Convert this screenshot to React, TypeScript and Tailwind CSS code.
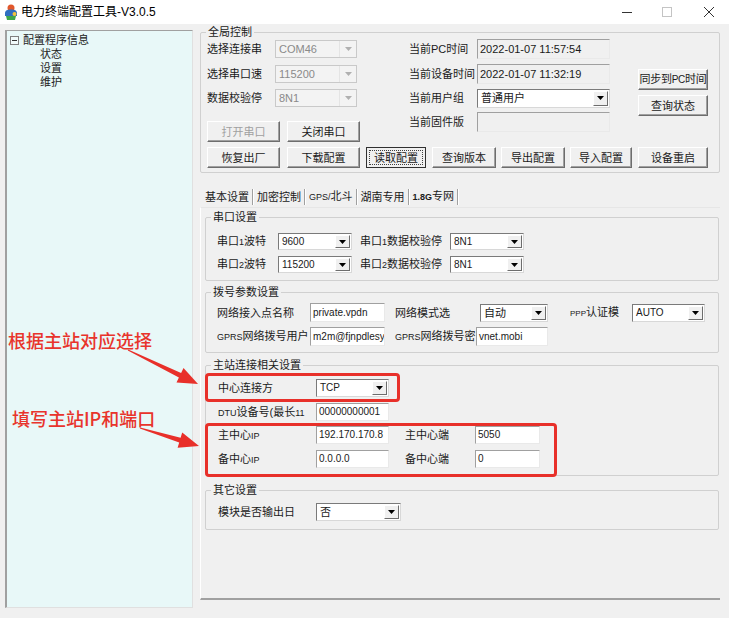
import React from "react";

type ComboProps = { value: string; cls: string; disabled?: boolean; vcls?: string };

function Combo({ value, cls, disabled, vcls = "" }: ComboProps) {
  if (disabled)
    return (
      <div className={`${cls} shrink-0 flex items-center border border-[#c9c9c9] bg-[#f3f3f3] text-[#8a8a8a]`}>
        <span className={`flex-1 pl-[3px] whitespace-nowrap overflow-hidden ${vcls}`}>{value}</span>
        <div className="w-[17px] h-full flex items-center justify-center border-l border-[#e4e4e4]">
          <svg width="7" height="4" viewBox="0 0 7 4">
            <path d="M0 0h7L3.5 4z" fill="#b0b0b0" />
          </svg>
        </div>
      </div>
    );
  return (
    <div
      className={`${cls} shrink-0 flex items-center bg-white border border-t-[#7a7a7a] border-l-[#7a7a7a] border-r-[#d8d8d8] border-b-[#d8d8d8] pr-[1px]`}
    >
      <span className={`flex-1 pl-[3px] whitespace-nowrap overflow-hidden ${vcls}`}>{value}</span>
      <div className="w-[15px] h-[calc(100%-2px)] bg-[#f0f0f0] border border-t-white border-l-white border-r-[#6d6d6d] border-b-[#6d6d6d] flex items-center justify-center">
        <svg width="7" height="4" viewBox="0 0 7 4">
          <path d="M0 0h7L3.5 4z" fill="#000" />
        </svg>
      </div>
    </div>
  );
}

function Input({ value, cls, ro }: { value: string; cls: string; ro?: boolean }) {
  return (
    <div
      className={`${cls} shrink-0 flex items-center overflow-hidden whitespace-nowrap border border-t-[#a0a0a0] border-l-[#a0a0a0] border-r-[#e9e9e9] border-b-[#e9e9e9] pl-[2px] ${
        ro ? "bg-[#f0f0f0] text-[11px]" : "bg-white text-[10px]"
      }`}
    >
      {value}
    </div>
  );
}

function Btn({ label, cls, disabled, focused }: { label: React.ReactNode; cls: string; disabled?: boolean; focused?: boolean }) {
  if (focused)
    return (
      <div className={`${cls} shrink-0 h-[21px] border border-[#303030] bg-[#f0f0f0] p-[2px]`}>
        <div className="w-full h-full border border-dotted border-[#404040] flex items-center justify-center whitespace-nowrap">
          {label}
        </div>
      </div>
    );
  return (
    <div
      className={`${cls} shrink-0 h-[21px] flex items-center justify-center whitespace-nowrap bg-[#f0f0f0] border border-t-white border-l-white border-r-[#6d6d6d] border-b-[#6d6d6d] shadow-[inset_-1px_-1px_0_#a0a0a0] ${
        disabled ? "text-[#a0a0a0]" : ""
      }`}
    >
      {label}
    </div>
  );
}

function Lbl({ cls, children }: { cls: string; children: React.ReactNode }) {
  return <div className={`${cls} shrink-0 whitespace-nowrap`}>{children}</div>;
}

const S = ({ children }: { children: React.ReactNode }) => <span className="text-[9px]">{children}</span>;

function TitleBar() {
  return (
    <div className="h-[24px] bg-white flex items-center">
      <svg className="ml-[4px]" width="14" height="17" viewBox="0 0 14 17">
        <circle cx="7" cy="4" r="3.5" fill="#e2572b" />
        <path d="M1 9c0-2.5 2.5-3.5 6-3.5s6 1 6 3.5v3H1z" fill="#2f6fc0" />
        <path d="M2 12h10l-1 4H3z" fill="#3ea64a" />
        <circle cx="10.5" cy="10" r="2" fill="#f3c43c" />
      </svg>
      <span className="ml-[3px] text-[12px] text-black">电力终端配置工具-V3.0.5</span>
      <div className="ml-auto mr-[15px] flex items-center">
        <svg width="10" height="10" viewBox="0 0 10 10">
          <path d="M0 5.5h10" stroke="#333" strokeWidth="1" />
        </svg>
        <svg className="ml-[30px]" width="10" height="10" viewBox="0 0 10 10">
          <rect x="0.5" y="0.5" width="9" height="9" fill="none" stroke="#c4c4c4" />
        </svg>
        <svg className="ml-[32px]" width="10" height="10" viewBox="0 0 10 10">
          <path d="M0 0L10 10M10 0L0 10" stroke="#333" strokeWidth="1" />
        </svg>
      </div>
    </div>
  );
}

function Tree() {
  return (
    <div className="ml-[5px] mt-[6px] w-[188px] h-[578px] shrink-0 bg-[#e8f8f8] border-t border-l-2 border-r border-b border-t-[#a0a0a0] border-l-[#a0a0a0] border-r-[#e0e0e0] border-b-[#e0e0e0] text-[#222]">
      <div className="flex items-center mt-[2px] ml-[3px] h-[14px]">
        <div className="w-[9px] h-[9px] border border-[#808080] flex items-center justify-center bg-white/40">
          <div className="w-[5px] h-[1px] bg-[#333]" />
        </div>
        <span className="ml-[4px]">配置程序信息</span>
      </div>
      <div className="ml-[33px] flex flex-col">
        <span className="h-[14px]">状态</span>
        <span className="h-[14px]">设置</span>
        <span className="h-[14px]">维护</span>
      </div>
    </div>
  );
}

function Group({ title, cls, children }: { title: string; cls: string; children: React.ReactNode }) {
  return (
    <fieldset className={`${cls} border border-[#d0d0d0] rounded-[2px]`}>
      <legend className="ml-[5px] px-[2px] leading-[14px]">{title}</legend>
      {children}
    </fieldset>
  );
}

function Global() {
  return (
    <Group title="全局控制" cls="w-[520px]">
      <div className="pl-[6px] pb-[4px]">
        <div className="flex items-start">
          <div className="flex flex-col w-[153px]">
            <div className="h-[20px] flex items-center">
              <Lbl cls="w-[68px]">选择连接串</Lbl>
              <Combo value="COM46" cls="w-[82px] h-[18px]" disabled />
            </div>
            <div className="h-[20px] mt-[5px] flex items-center">
              <Lbl cls="w-[68px]">选择串口速</Lbl>
              <Combo value="115200" cls="w-[82px] h-[18px]" disabled />
            </div>
            <div className="h-[20px] mt-[4px] flex items-center">
              <Lbl cls="w-[68px]">数据校验停</Lbl>
              <Combo value="8N1" cls="w-[82px] h-[18px]" disabled />
            </div>
            <div className="mt-[13px] flex">
              <Btn label="打开串口" cls="w-[73px]" disabled />
              <Btn label="关闭串口" cls="w-[73px] ml-[7px]" />
            </div>
          </div>
          <div className="ml-[49px] flex flex-col w-[201px]">
            <div className="h-[20px] flex items-center">
              <Lbl cls="w-[68px]">当前PC时间</Lbl>
              <Input value="2022-01-07 11:57:54" cls="w-[133px] h-[20px]" ro />
            </div>
            <div className="h-[20px] mt-[5px] flex items-center">
              <Lbl cls="w-[68px]">当前设备时间</Lbl>
              <Input value="2022-01-07 11:32:19" cls="w-[133px] h-[20px]" ro />
            </div>
            <div className="h-[20px] mt-[4px] flex items-center">
              <Lbl cls="w-[68px]">当前用户组</Lbl>
              <Combo value="普通用户" cls="w-[133px] h-[19px]" />
            </div>
            <div className="h-[20px] mt-[4px] flex items-center">
              <Lbl cls="w-[68px]">当前固件版</Lbl>
              <Input value="" cls="w-[133px] h-[20px]" ro />
            </div>
          </div>
          <div className="ml-[28px] flex flex-col mt-[30px]">
            <Btn
              label={
                <span className="tracking-[-0.3px]">
                  同步到<span className="text-[10px]">PC</span>时间
                </span>
              }
              cls="w-[70px]"
            />
            <Btn label="查询状态" cls="w-[70px] mt-[5px]" />
          </div>
        </div>
        <div className="mt-[5px] flex">
          <Btn label="恢复出厂" cls="w-[73px]" />
          <Btn label="下载配置" cls="w-[73px] ml-[7px]" />
          <Btn label="读取配置" cls="w-[60px] ml-[6px]" focused />
          <Btn label="查询版本" cls="w-[64px] ml-[6px]" />
          <Btn label="导出配置" cls="w-[64px] ml-[5px]" />
          <Btn label="导入配置" cls="w-[62px] ml-[5px]" />
          <Btn label="设备重启" cls="w-[70px] ml-[6px]" />
        </div>
      </div>
    </Group>
  );
}

function Sep() {
  return <div className="w-[2px] h-[16px] border-l border-r border-l-[#a0a0a0] border-r-white mx-[2px]" />;
}

function Tabs() {
  return (
    <div className="mt-[15px] ml-[4px] h-[17px] flex items-center">
      <span className="px-[1px]">基本设置</span>
      <Sep />
      <span className="px-[1px]">加密控制</span>
      <Sep />
      <span className="px-[1px]">
        <S>GPS/</S>北斗
      </span>
      <Sep />
      <span className="px-[1px]">湖南专用</span>
      <Sep />
      <span className="px-[1px]">
        <span className="text-[9px] font-bold">1.8G</span>专网
      </span>
      <Sep />
    </div>
  );
}

function Panel() {
  const v = "text-[10px]";
  return (
    <div className="mt-[2px] w-[520px] h-[393px] border-t border-t-[#e6e6e6] border-l border-l-white border-b-2 border-b-[#a0a0a0]">
      <Group title="串口设置" cls="ml-[4px] mt-[2px] w-[514px]">
        <div className="pl-[11px] pt-[9px] pb-[7px]">
          <div className="h-[17px] flex items-center">
            <Lbl cls="w-[61px]">
              串口<S>1</S>波特
            </Lbl>
            <Combo value="9600" cls="w-[74px] h-[17px]" vcls={v} />
            <Lbl cls="w-[90px] ml-[8px]">
              串口<S>1</S>数据校验停
            </Lbl>
            <Combo value="8N1" cls="w-[74px] h-[17px]" vcls={v} />
          </div>
          <div className="h-[17px] mt-[6px] flex items-center">
            <Lbl cls="w-[61px]">
              串口<S>2</S>波特
            </Lbl>
            <Combo value="115200" cls="w-[74px] h-[17px]" vcls={v} />
            <Lbl cls="w-[90px] ml-[8px]">
              串口<S>2</S>数据校验停
            </Lbl>
            <Combo value="8N1" cls="w-[74px] h-[17px]" vcls={v} />
          </div>
        </div>
      </Group>

      <Group title="拨号参数设置" cls="ml-[4px] mt-[4px] w-[514px]">
        <div className="pl-[11px] pt-[4px] pb-[6px]">
          <div className="h-[19px] flex items-center">
            <Lbl cls="w-[93px]">网络接入点名称</Lbl>
            <Input value="private.vpdn" cls="w-[75px] h-[19px]" />
            <Lbl cls="w-[85px] ml-[10px]">网络模式选</Lbl>
            <Combo value="自动" cls="w-[68px] h-[18px]" />
            <Lbl cls="w-[62px] ml-[22px]">
              <span className="text-[8px]">PPP</span>认证模
            </Lbl>
            <Combo value="AUTO" cls="w-[73px] h-[18px]" vcls={v} />
          </div>
          <div className="h-[19px] mt-[5px] flex items-center">
            <Lbl cls="w-[93px]">
              <S>GPRS</S>网络拨号用户
            </Lbl>
            <Input value="m2m@fjnpdlesy.v" cls="w-[75px] h-[19px]" />
            <Lbl cls="w-[81px] ml-[10px]">
              <S>GPRS</S>网络拨号密
            </Lbl>
            <Input value="vnet.mobi" cls="w-[72px] h-[19px]" />
          </div>
        </div>
      </Group>

      <Group title="主站连接相关设置" cls="ml-[4px] mt-[5px] w-[514px]">
        <div className="pl-[12px] pt-[7px] pb-[7px]">
          <div className="h-[18px] flex items-center">
            <Lbl cls="w-[98px]">中心连接方</Lbl>
            <Combo value="TCP" cls="w-[73px] h-[18px]" vcls={v} />
          </div>
          <div className="h-[18px] mt-[6px] flex items-center">
            <Lbl cls="w-[98px]">
              <S>DTU</S>设备号(最长<S>11</S>
            </Lbl>
            <Input value="00000000001" cls="w-[73px] h-[18px]" />
          </div>
          <div className="h-[18px] mt-[5px] flex items-center">
            <Lbl cls="w-[98px]">
              主中心<S>IP</S>
            </Lbl>
            <Input value="192.170.170.8" cls="w-[73px] h-[18px]" />
            <Lbl cls="w-[70px] ml-[16px]">主中心端</Lbl>
            <Input value="5050" cls="w-[65px] h-[18px]" />
          </div>
          <div className="h-[18px] mt-[6px] flex items-center">
            <Lbl cls="w-[98px]">
              备中心<S>IP</S>
            </Lbl>
            <Input value="0.0.0.0" cls="w-[73px] h-[18px]" />
            <Lbl cls="w-[70px] ml-[16px]">备中心端</Lbl>
            <Input value="0" cls="w-[65px] h-[18px]" />
          </div>
        </div>
      </Group>

      <Group title="其它设置" cls="ml-[4px] mt-[7px] w-[514px]">
        <div className="pl-[12px] pt-[6px] pb-[8px]">
          <div className="h-[18px] flex items-center">
            <Lbl cls="w-[98px]">模块是否输出日</Lbl>
            <Combo value="否" cls="w-[85px] h-[18px]" />
          </div>
        </div>
      </Group>
    </div>
  );
}

function Annotations() {
  return (
    <>
      <div className="absolute left-[205px] top-[373px] w-[195px] h-[29px] border-[3px] border-[#e8302a] rounded-[4px]" />
      <div className="absolute left-[205px] top-[423px] w-[352px] h-[54px] border-[3px] border-[#e8302a] rounded-[4px]" />
      <div className="absolute left-[8px] top-[328px] text-[18px] leading-[24px] font-medium text-[#e8342c] font-['Noto_Sans_CJK_SC',sans-serif]">
        根据主站对应选择
      </div>
      <div className="absolute left-[12px] top-[406px] text-[18px] leading-[24px] font-medium text-[#e8342c] font-['Noto_Sans_CJK_SC',sans-serif]">
        填写主站IP和端口
      </div>
      <svg className="absolute left-0 top-0 pointer-events-none" width="729" height="618" viewBox="0 0 729 618">
        <polygon
          points="127.8,350.45 178.9,377.5 176.5,382.5 198,384 183.5,368.1 181.1,373.0 128.2,349.55"
          fill="#e8302a"
        />
        <polygon
          points="139.85,428.48 179.2,442.6 177.6,447.8 199,446 182.2,432.6 180.6,437.8 140.15,427.52"
          fill="#e8302a"
        />
      </svg>
    </>
  );
}

export default function App() {
  return (
    <div className="relative w-[729px] h-[618px] bg-[#f0f0f0] overflow-hidden text-[11px] leading-[14px] text-[#1a1a1a] font-['Liberation_Sans','Noto_Sans_CJK_SC',sans-serif]">
      <TitleBar />
      <div className="flex items-start">
        <Tree />
        <div className="ml-[7px] mt-[1px] flex flex-col">
          <Global />
          <Tabs />
          <Panel />
        </div>
      </div>
      <Annotations />
    </div>
  );
}
